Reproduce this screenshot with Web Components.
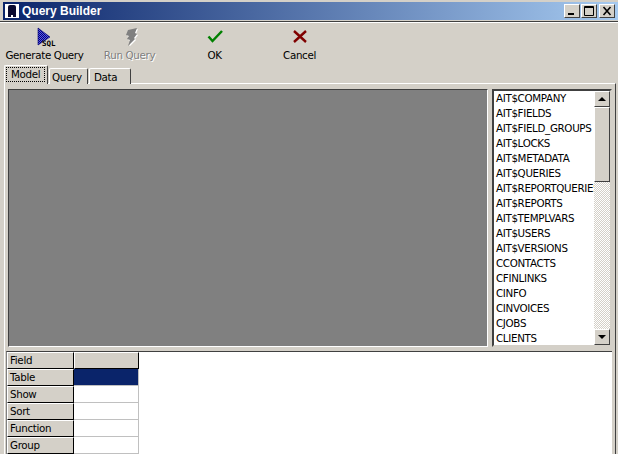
<!DOCTYPE html>
<html>
<head>
<meta charset="utf-8">
<title>Query Builder</title>
<style>
	html, body { margin: 0; height: 454px; overflow: hidden; background: #d4d0c8; }
	body { font: 10.3px "DejaVu Sans", sans-serif; letter-spacing: -0.33px; color: #000; }
</style>
</head>
<body>
<qb-window>
	<qb-titlebar slot="title">Query Builder</qb-titlebar>
	<qb-toolbar slot="toolbar">
		<qb-tool label="Generate Query">
			<svg viewBox="0 0 24 20" width="24" height="20">
				<defs>
					<pattern id="dither" width="2" height="2" patternUnits="userSpaceOnUse">
						<rect width="2" height="2" fill="#000080"/>
						<rect width="1" height="1" fill="#5a5ae0"/>
						<rect x="1" y="1" width="1" height="1" fill="#5a5ae0"/>
					</pattern>
				</defs>
				<path d="M5 2 L17 11 L5 19 Z" fill="url(#dither)" stroke="#000070" stroke-width=".6"/>
			</svg>
			<span slot="badge">SQL</span>
		</qb-tool>
		<qb-tool label="Run Query" disabled>
			<svg viewBox="0 0 24 20" width="24" height="20">
				<g transform="translate(0 1)">
					<path d="M10 3 L19 1 L17 6 L19 7 L16 11 L17 12 L10 19 L12 13 L9 12 L11 9 L8 8 Z" fill="#fff" transform="translate(1 1)"/>
					<path d="M10 3 L19 1 L17 6 L19 7 L16 11 L17 12 L10 19 L12 13 L9 12 L11 9 L8 8 Z" fill="#808080"/>
				</g>
			</svg>
		</qb-tool>
		<qb-tool label="OK">
			<svg viewBox="0 0 24 20" width="24" height="20">
				<path d="M5.5 10.5 L9.5 15 L19 5" fill="none" stroke="#008000" stroke-width="2.5"/>
			</svg>
		</qb-tool>
		<qb-tool label="Cancel">
			<svg viewBox="0 0 24 20" width="24" height="20">
				<path d="M6 5 L18 16 M18 5 L6 16" fill="none" stroke="#800000" stroke-width="2.4"/>
			</svg>
		</qb-tool>
	</qb-toolbar>
	<qb-tabs slot="tabs" selected="Model" names="Model,Query,Data"></qb-tabs>
	<qb-canvas slot="canvas"></qb-canvas>
	<qb-listbox slot="list" items="AIT$COMPANY,AIT$FIELDS,AIT$FIELD_GROUPS,AIT$LOCKS,AIT$METADATA,AIT$QUERIES,AIT$REPORTQUERIES,AIT$REPORTS,AIT$TEMPLVARS,AIT$USERS,AIT$VERSIONS,CCONTACTS,CFINLINKS,CINFO,CINVOICES,CJOBS,CLIENTS"></qb-listbox>
	<qb-grid slot="grid" rows="Field,Table,Show,Sort,Function,Group"></qb-grid>
</qb-window>

<script>
/* Win2k style query builder dialog */

class QbWindow extends HTMLElement {
	constructor() {
		super();
		this.attachShadow({ mode: "open" });
		this.shadowRoot.innerHTML = `
      <style>
        :host { display: flex; flex-direction: column; height: 454px; overflow: hidden; padding-top: 2px; box-sizing: border-box; }
        .rule { height: 1px; margin-top: 1px; background: #404040; flex: none; }
        .rule + .rule { margin: 0; background: #fff; }
        .panel {
          flex: 1; min-height: 0; display: flex; flex-direction: column;
          margin: 0 2px 0 4px; padding: 5px 3px 0 3px;
          border-top: 1px solid #fff; border-left: 1px solid #fff; border-right: 1px solid #404040;
        }
        .model { display: flex; gap: 4px; height: 258px; flex: none; }
        .split { height: 4px; flex: none; }
        .lower { flex: 1; min-height: 0; margin-left: -2px; border-top: 1px solid #404040; border-left: 1px solid #808080; background: #fff; }
        ::slotted([slot="title"]) { margin-left: 3px; }
      </style>
      <slot name="title"></slot>
      <div class="rule"></div><div class="rule"></div>
      <slot name="toolbar"></slot>
      <slot name="tabs"></slot>
      <div class="panel">
        <div class="model"><slot name="canvas"></slot><slot name="list"></slot></div>
        <div class="split"></div>
        <div class="lower"><slot name="grid"></slot></div>
      </div>`;
	}
}

class QbTitlebar extends HTMLElement {
	constructor() {
		super();
		this.attachShadow({ mode: "open" });
		this.shadowRoot.innerHTML = `
      <style>
        :host {
          display: flex; align-items: center; height: 18px; padding: 0 3px 0 2px;
          background: linear-gradient(90deg, #0a246a, #a6caf0);
          color: #fff; font: bold 12px "Liberation Sans", sans-serif; letter-spacing: 0;
        }
        svg { flex: none; margin-right: 3px; }
        .text { flex: 1; }
        .btn {
          width: 16px; height: 14px; box-sizing: border-box; background: #d4d0c8; flex: none;
          border: 1px solid; border-color: #fff #404040 #404040 #fff; display: block;
        }
        .btn svg { display: block; margin: 0; }
        .max { margin: 0 2px 0 1px; }
      </style>
      <svg width="14" height="14" viewBox="0 0 14 14">
        <rect width="14" height="14" fill="#fff"/>
        <path d="M3 13 V3 Q3 1 5 1 H9 Q11 1 11 3 V13 Z" fill="#0a0a30"/>
        <rect x="6" y="11" width="2" height="2" fill="#fff"/>
      </svg>
      <span class="text"><slot></slot></span>
      <span class="btn"><svg width="14" height="12"><rect x="3" y="8" width="6" height="2" fill="#000"/></svg></span>
      <span class="btn max"><svg width="14" height="12"><path d="M2.5 1.5 H11.5 V10.5 H2.5 Z M2 2.5 H12" fill="none" stroke="#000"/></svg></span>
      <span class="btn"><svg width="14" height="12"><path d="M3.5 2 L10.5 10 M10.5 2 L3.5 10" stroke="#000" stroke-width="1.6"/></svg></span>`;
	}
}

class QbToolbar extends HTMLElement {
	constructor() {
		super();
		this.attachShadow({ mode: "open" });
		this.shadowRoot.innerHTML = `
      <style>
        :host { display: grid; grid-template-columns: repeat(4, 85px); height: 43px; padding-left: 2px; flex: none; }
      </style>
      <slot></slot>`;
	}
}

class QbTool extends HTMLElement {
	constructor() {
		super();
		this.attachShadow({ mode: "open" });
		const label = this.getAttribute("label");
		this.shadowRoot.innerHTML = `
      <style>
        :host { display: flex; flex-direction: column; align-items: center; padding-top: 3px; }
        .icon { position: relative; width: 25px; height: 20px; }
        .icon ::slotted(svg) { display: block; margin-left: 1px; }
        .icon ::slotted(span) {
          position: absolute; left: 10px; top: 13px; letter-spacing: 0;
          font: bold 7.5px "DejaVu Sans Mono", monospace; color: #000;
        }
        .label { margin-top: 3px; white-space: nowrap; line-height: 13px; }
        :host([disabled]) .label { color: #808080; text-shadow: 1px 1px 0 #fff; }
      </style>
      <div class="icon"><slot></slot><slot name="badge"></slot></div>
      <div class="label">${label}</div>`;
	}
}

class QbTabs extends HTMLElement {
	constructor() {
		super();
		this.attachShadow({ mode: "open" });
		const selected = this.getAttribute("selected");
		const sizes = { Model: [44, 2], Query: [39, 2], Data: [42, 4] };
		const tabs = this.getAttribute("names").split(",").map((name) => `
        <div class="tab ${name === selected ? "on" : ""}" style="width:${sizes[name][0]}px;padding-left:${sizes[name][1]}px">
          <span>${name}</span>
        </div>`).join("");
		this.shadowRoot.innerHTML = `
      <style>
        :host { display: flex; align-items: flex-end; gap: 1px; height: 18px; padding-left: 4px; flex: none; margin-bottom: -1px; position: relative; z-index: 1; }
        .tab {
          box-sizing: border-box; height: 16px; display: flex; align-items: center;
          background: #d4d0c8; border: 1px solid; border-color: #fff #404040 transparent #fff; border-bottom: 0;
          border-radius: 2px 2px 0 0;
        }
        .tab.on { height: 19px; }
        .tab.on span { outline: 1px dotted #000; padding: 0 4px; margin-top: -2px; line-height: 13px; }
      </style>
      ${tabs}`;
	}
}

class QbCanvas extends HTMLElement {
	constructor() {
		super();
		this.attachShadow({ mode: "open" });
		this.shadowRoot.innerHTML = `
      <style>
        :host {
          display: block; box-sizing: border-box; width: 480px; height: 258px; background: #808080;
          border: 1px solid; border-color: #404040 #fff #fff #404040;
        }
      </style>`;
	}
}

class QbListbox extends HTMLElement {
	constructor() {
		super();
		this.attachShadow({ mode: "open" });
		const items = this.getAttribute("items").split(",")
			.map((item) => `<li>${item}</li>`).join("");
		this.shadowRoot.innerHTML = `
      <style>
        :host {
          display: flex; box-sizing: border-box; width: 120px; height: 258px; background: #fff;
          border: 2px solid; border-color: #404040 #d4d0c8 #d4d0c8 #404040;
        }
        ul { flex: 1; min-width: 0; list-style: none; margin: 0; padding: 0 0 0 2px; overflow: hidden; white-space: nowrap; }
        li { height: 15px; line-height: 15px; }
        .bar {
          width: 16px; flex: none; display: flex; flex-direction: column;
          background: repeating-conic-gradient(#fff 0 25%, #d4d0c8 0 50%) 0 0 / 2px 2px;
        }
        .btn, .thumb {
          box-sizing: border-box; background: #d4d0c8; flex: none;
          border: 1px solid; border-color: #fff #404040 #404040 #fff;
        }
        .btn { height: 16px; display: flex; align-items: center; justify-content: center; }
        .thumb { height: 75px; }
        .track { flex: 1; }
        .up { border: 4px solid transparent; border-top: 0; border-bottom: 4px solid #000; }
        .down { border: 4px solid transparent; border-bottom: 0; border-top: 4px solid #000; }
      </style>
      <ul>${items}</ul>
      <div class="bar">
        <div class="btn"><div class="up"></div></div>
        <div class="thumb"></div>
        <div class="track"></div>
        <div class="btn"><div class="down"></div></div>
      </div>`;
	}
}

class QbGrid extends HTMLElement {
	constructor() {
		super();
		this.attachShadow({ mode: "open" });
		const cells = this.getAttribute("rows").split(",").map((name, i) => {
			let second = "cell";
			if (i === 0) second = "head";
			if (i === 1) second = "cell sel";
			return `<div class="head">${name}</div><div class="${second}"></div>`;
		}).join("");
		this.shadowRoot.innerHTML = `
      <style>
        :host { display: grid; grid-template-columns: 67px 65px; grid-auto-rows: 17px; width: 132px; }
        .head {
          box-sizing: border-box; background: #d4d0c8; padding-left: 2px; line-height: 15px;
          border: 1px solid; border-color: #fff #000 #000 #fff;
        }
        .cell { box-sizing: border-box; background: #fff; border: solid #c0c0c0; border-width: 0 1px 1px 0; }
        .sel { background: #0a246a; }
      </style>
      ${cells}`;
	}
}

customElements.define("qb-window", QbWindow);
customElements.define("qb-titlebar", QbTitlebar);
customElements.define("qb-toolbar", QbToolbar);
customElements.define("qb-tool", QbTool);
customElements.define("qb-tabs", QbTabs);
customElements.define("qb-canvas", QbCanvas);
customElements.define("qb-listbox", QbListbox);
customElements.define("qb-grid", QbGrid);
</script>
</body>
</html>
